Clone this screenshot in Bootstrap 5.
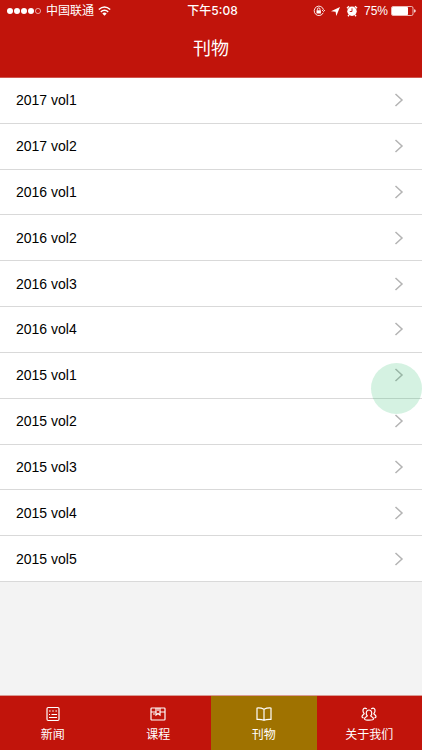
<!DOCTYPE html>
<html lang="zh-CN">
<head>
<meta charset="utf-8">
<meta name="viewport" content="width=device-width, initial-scale=1">
<title>刊物</title>
<link href="https://cdn.jsdelivr.net/npm/bootstrap@5.3.0/dist/css/bootstrap.min.css" rel="stylesheet">
<style>
body { font-family: "Liberation Sans", "Noto Sans CJK SC", sans-serif; background: #f3f3f3; color: #000; }
.app-red { background: #c1140b; color: #fff; }
.status-bar { height: 22px; padding: 0 6px; font-size: 12px; line-height: 22px; }
.status-side { flex: 1 1 0; }
.status-time { font-family: Inter, "Noto Sans CJK SC", sans-serif; font-size: 12px; font-weight: 500; padding-left: 3px; }
.status-bar svg, .tab-link svg, .issue-link svg { display: block; flex: none; }
.status-icons { gap: 6px; }
.status-power { gap: 3px; }
.page-title { font-size: 18px; line-height: 27px; padding: 14px 0; margin: 0; font-weight: 400; }
.app-header { border-bottom: 1px solid #d0564f; }
.issues { min-height: 504px; display: grid; grid-auto-rows: 1fr; }
.issue { border-bottom: 1px solid #d9d9d9; background: #fff; }
.issue-link { color: #000; font-size: 14px; line-height: 22px; padding: 0 18px 0 16px; }
.touch-dot { top: 10px; right: 0; width: 51px; height: 51px; background: rgba(46, 190, 112, .2); z-index: 2; pointer-events: none; }
.tab-bar { border-top: 1px solid #d99a94; }
.tab-link { flex: 1 1 0; color: #fff; font-size: 12px; line-height: 18px; padding: 10px 0 6px; gap: 4px; }
.tab-link.active { background: #9f7200; }
</style>
</head>
<body class="d-flex flex-column min-vh-100">
<header class="app-header app-red">
  <div class="status-bar d-flex align-items-center">
    <div class="status-side d-flex align-items-center">
      <svg width="36" height="8" viewBox="0 0 36 8" fill="#fff" aria-hidden="true"><circle cx="4" cy="4" r="3"/><circle cx="11" cy="4" r="3"/><circle cx="18" cy="4" r="3"/><circle cx="25" cy="4" r="3"/><circle cx="32" cy="4" r="2.6" fill="none" stroke="#fff" stroke-width=".6"/></svg>
      <span class="ps-1 pe-1 text-nowrap">中国联通</span>
      <svg width="13" height="10" viewBox="0 0 13 10" fill="none" stroke="#fff" stroke-width="1.500" aria-hidden="true"><path d="M.8 3.500Q6.500-1.600 12.200 3.500M2.800 5.800q3.700-3 7.400 0"/><path d="M4.300 7.400q2.200-1.600 4.400 0L6.500 9.800z" fill="#fff" stroke="none"/></svg>
    </div>
    <span class="status-time">下午5:08</span>
    <div class="status-side status-icons d-flex align-items-center justify-content-end">
      <svg width="12" height="12" viewBox="0 0 12 12" fill="none" stroke="#fff" stroke-width=".9" aria-hidden="true"><path d="M10.200 7.800A4.700 4.700 0 1 1 10.500 4.800M9 5l1.600 1.500L12 5"/><path d="M4.400 5.500V4.200a1.300 1.300 0 0 1 2.600 0v1.300"/><path d="M3.500 5.300h4.400v3.200H3.500z" fill="#fff" stroke="none"/></svg>
      <svg width="9" height="9" viewBox="0 0 9 9" fill="#fff" aria-hidden="true"><path d="M9 0 5.300 9 4.600 4.700 0 4.300z"/></svg>
      <svg width="12" height="12" viewBox="0 0 12 12" fill="none" stroke="#fff" aria-hidden="true"><circle cx="6" cy="6.200" r="4.700" fill="#fff" stroke="none"/><path d="M1 3.200 3 1.300M11 3.200 9 1.300M3 10l-1 1.300M9 10l1 1.300" stroke-width="1.400"/><path d="M6 3.300v3.200h-2.200" stroke="#c1140b" stroke-width=".9"/></svg>
      <span class="status-power d-flex align-items-center">75%<svg width="25" height="10" viewBox="0 0 25 10" aria-hidden="true"><rect x=".5" y=".5" width="21.500" height="9" rx="1.500" fill="none" stroke="#fff" stroke-width=".7"/><rect x="1" y="1" width="16" height="8" rx=".8" fill="#fff"/><path d="M23.200 3.300q1.500.3 1.500 1.700t-1.500 1.700z" fill="#fff"/></svg></span>
    </div>
  </div>
  <h1 class="page-title text-center">刊物</h1>
</header>
<main class="flex-grow-1">
  <ul class="issues list-unstyled mb-0">
    <li class="issue d-flex"><a href="#" class="issue-link d-flex flex-grow-1 align-items-center justify-content-between text-decoration-none">2017 vol1<svg width="10" height="14" viewBox="0 0 10 14" fill="none" stroke="#b4b4b4" stroke-width="1.500" aria-hidden="true"><path d="m1.500 1 6.500 6-6.500 6"/></svg></a></li>
    <li class="issue d-flex"><a href="#" class="issue-link d-flex flex-grow-1 align-items-center justify-content-between text-decoration-none">2017 vol2<svg width="10" height="14" viewBox="0 0 10 14" fill="none" stroke="#b4b4b4" stroke-width="1.500" aria-hidden="true"><path d="m1.500 1 6.500 6-6.500 6"/></svg></a></li>
    <li class="issue d-flex"><a href="#" class="issue-link d-flex flex-grow-1 align-items-center justify-content-between text-decoration-none">2016 vol1<svg width="10" height="14" viewBox="0 0 10 14" fill="none" stroke="#b4b4b4" stroke-width="1.500" aria-hidden="true"><path d="m1.500 1 6.500 6-6.500 6"/></svg></a></li>
    <li class="issue d-flex"><a href="#" class="issue-link d-flex flex-grow-1 align-items-center justify-content-between text-decoration-none">2016 vol2<svg width="10" height="14" viewBox="0 0 10 14" fill="none" stroke="#b4b4b4" stroke-width="1.500" aria-hidden="true"><path d="m1.500 1 6.500 6-6.500 6"/></svg></a></li>
    <li class="issue d-flex"><a href="#" class="issue-link d-flex flex-grow-1 align-items-center justify-content-between text-decoration-none">2016 vol3<svg width="10" height="14" viewBox="0 0 10 14" fill="none" stroke="#b4b4b4" stroke-width="1.500" aria-hidden="true"><path d="m1.500 1 6.500 6-6.500 6"/></svg></a></li>
    <li class="issue d-flex"><a href="#" class="issue-link d-flex flex-grow-1 align-items-center justify-content-between text-decoration-none">2016 vol4<svg width="10" height="14" viewBox="0 0 10 14" fill="none" stroke="#b4b4b4" stroke-width="1.500" aria-hidden="true"><path d="m1.500 1 6.500 6-6.500 6"/></svg></a></li>
    <li class="issue d-flex position-relative"><a href="#" class="issue-link d-flex flex-grow-1 align-items-center justify-content-between text-decoration-none">2015 vol1<svg width="10" height="14" viewBox="0 0 10 14" fill="none" stroke="#b4b4b4" stroke-width="1.500" aria-hidden="true"><path d="m1.500 1 6.500 6-6.500 6"/></svg></a><span class="touch-dot position-absolute rounded-circle"></span></li>
    <li class="issue d-flex"><a href="#" class="issue-link d-flex flex-grow-1 align-items-center justify-content-between text-decoration-none">2015 vol2<svg width="10" height="14" viewBox="0 0 10 14" fill="none" stroke="#b4b4b4" stroke-width="1.500" aria-hidden="true"><path d="m1.500 1 6.500 6-6.500 6"/></svg></a></li>
    <li class="issue d-flex"><a href="#" class="issue-link d-flex flex-grow-1 align-items-center justify-content-between text-decoration-none">2015 vol3<svg width="10" height="14" viewBox="0 0 10 14" fill="none" stroke="#b4b4b4" stroke-width="1.500" aria-hidden="true"><path d="m1.500 1 6.500 6-6.500 6"/></svg></a></li>
    <li class="issue d-flex"><a href="#" class="issue-link d-flex flex-grow-1 align-items-center justify-content-between text-decoration-none">2015 vol4<svg width="10" height="14" viewBox="0 0 10 14" fill="none" stroke="#b4b4b4" stroke-width="1.500" aria-hidden="true"><path d="m1.500 1 6.500 6-6.500 6"/></svg></a></li>
    <li class="issue d-flex"><a href="#" class="issue-link d-flex flex-grow-1 align-items-center justify-content-between text-decoration-none">2015 vol5<svg width="10" height="14" viewBox="0 0 10 14" fill="none" stroke="#b4b4b4" stroke-width="1.500" aria-hidden="true"><path d="m1.500 1 6.500 6-6.500 6"/></svg></a></li>
  </ul>
</main>
<nav class="tab-bar app-red d-flex sticky-bottom" aria-label="主导航">
  <a href="#" class="tab-link d-flex flex-column align-items-center text-decoration-none">
    <svg width="16" height="16" viewBox="0 0 16 16" fill="none" stroke="#fff" stroke-width="1.200" aria-hidden="true"><rect x="2" y="1.500" width="12" height="13" rx="1.200"/><path d="M4 5h1.600M7.200 5h1.600M10.400 5H12M6.500 8.500H12M4 11.500h8M4 8.500h1"/></svg>
    新闻</a>
  <a href="#" class="tab-link d-flex flex-column align-items-center text-decoration-none">
    <svg width="16" height="16" viewBox="0 0 16 16" fill="none" stroke="#fff" stroke-width="1.200" aria-hidden="true"><rect x="1" y="2" width="14" height="12" rx=".8"/><path d="M1 6h5M10 6h5M6 2v7l2-1.500L10 9V2M8 2v3M3 8h2"/></svg>
    课程</a>
  <a href="#" class="tab-link active d-flex flex-column align-items-center text-decoration-none" aria-current="page">
    <svg width="16" height="16" viewBox="0 0 16 16" fill="none" stroke="#fff" stroke-width="1.200" stroke-linejoin="round" aria-hidden="true"><path d="M8 3.200Q5 1.700 1 2v11.500q4-.3 7 .8zM8 3.200Q11 1.700 15 2v11.500q-4-.3-7 .8z"/></svg>
    刊物</a>
  <a href="#" class="tab-link d-flex flex-column align-items-center text-decoration-none">
    <svg width="16" height="16" viewBox="0 0 16 16" fill="none" stroke="#fff" stroke-width="1.200" stroke-linecap="round" stroke-linejoin="round" aria-hidden="true"><path d="M6.300 9.800C4.700 8.500 4.700 4 8 4s3.300 4.500 1.700 5.800c0 1 2.800 1.100 2.800 3.200 0 1.500-9 1.500-9 0 0-2.100 2.800-2.200 2.800-3.200z"/><path d="M5.500 2.700C3.500 1.200 1.700 2.800 2 5c.1 1.300.5 2 1.200 2.500 0 1-2.200 1.300-2.200 3.300 0 .5.500.8 1.200 1M10.500 2.700c2-1.500 3.800.1 3.500 2.300-.1 1.300-.5 2-1.200 2.500 0 1 2.200 1.300 2.200 3.300 0 .5-.5.8-1.200 1"/></svg>
    关于我们</a>
</nav>
<script src="https://cdn.jsdelivr.net/npm/bootstrap@5.3.0/dist/js/bootstrap.bundle.min.js"></script>
</body>
</html>
